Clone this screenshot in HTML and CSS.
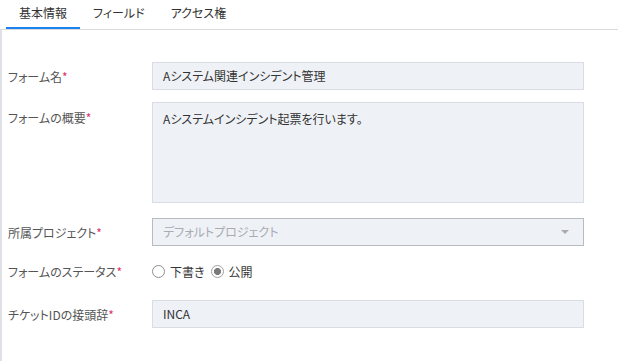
FILE: index.html
```html
<!DOCTYPE html>
<html lang="ja">
<head>
<meta charset="utf-8">
<link rel="stylesheet" href="styles.css">
</head>
<body>
<div class="page">
  <nav class="tabs">
    <div class="tab active">基本情報</div>
    <div class="tab">フィールド</div>
    <div class="tab">アクセス権</div>
  </nav>
  <div class="content">
    <form class="form">
      <div class="row">
        <label class="label">フォーム名<span class="req">*</span></label>
        <div class="field input">Aシステム関連インシデント管理</div>
      </div>
      <div class="row row-top">
        <label class="label label-top">フォームの概要<span class="req">*</span></label>
        <div class="field textarea">Aシステムインシデント起票を行います。</div>
      </div>
      <div class="row row-select">
        <label class="label">所属プロジェクト<span class="req">*</span></label>
        <div class="field select"><span class="placeholder">デフォルトプロジェクト</span><span class="caret"></span></div>
      </div>
      <div class="row row-radio">
        <label class="label">フォームのステータス<span class="req">*</span></label>
        <div class="radios">
          <span class="radio"><span class="dot"></span>下書き</span>
          <span class="radio checked"><span class="dot"></span>公開</span>
        </div>
      </div>
      <div class="row row-last">
        <label class="label">チケットIDの接頭辞<span class="req">*</span></label>
        <div class="field input">INCA</div>
      </div>
    </form>
  </div>
</div>
</body>
</html>
```
FILE: styles.css
```css
* { box-sizing: border-box; }
html, body {
  margin: 0;
  padding: 0;
  background: #fff;
}
body {
  font-family: "Noto Sans CJK JP", "Noto Sans", sans-serif;
  font-size: 12px;
  color: #333;
  font-feature-settings: "palt";
  width: 619px;
  height: 361px;
  overflow: hidden;
}
.page {
  width: 619px;
}
.tabs {
  display: flex;
  height: 30px;
  border-bottom: 1px solid #dcdcdc;
  margin-right: 1px;
  padding-left: 6px;
}
.tab {
  height: 29px;
  line-height: 26px;
  padding: 0 13px;
  font-size: 12px;
  color: #333;
}
.tab + .tab { margin-left: 0; }
.tab.active {
  border-bottom: 2px solid #1a82f0;
}
.content {
  border-left: 2px solid #dfe1e6;
  height: 331px;
  padding-top: 32px;
}
.form {
  display: flex;
  flex-direction: column;
  padding-left: 6px;
}
.row {
  display: flex;
  align-items: center;
  margin-bottom: 12px;
}
.row-top { align-items: flex-start; margin-bottom: 15px; }
.row-select { margin-bottom: 11px; }
.row-radio { height: 28px; margin-bottom: 15px; }
.label {
  width: 144px;
  flex: none;
  color: #555;
  font-size: 12px;
}
.label-top { padding-top: 7px; }
.req { color: #e0306a; }
.field {
  width: 432px;
  background: #eef1f6;
  border: 1px solid #d9dce2;
  padding: 0 10px;
  color: #333;
  font-size: 12px;
}
.input {
  height: 28px;
  line-height: 26px;
}
.textarea {
  height: 101px;
  padding-top: 7px;
  line-height: 18px;
}
.select {
  height: 28px;
  line-height: 26px;
  border-color: #b8bcc2;
  display: flex;
  justify-content: space-between;
  align-items: center;
}
.placeholder { color: #a8abb0; }
.caret {
  width: 0;
  height: 0;
  border-left: 4px solid transparent;
  border-right: 4px solid transparent;
  border-top: 4px solid #aaa;
  margin-right: 4px;
}
.radios {
  display: flex;
  align-items: center;
  gap: 6px;
}
.radio {
  display: inline-flex;
  align-items: center;
  color: #333;
}
.dot {
  width: 13px;
  height: 13px;
  border-radius: 50%;
  border: 1px solid #8f8f8f;
  background: #fff;
  margin-right: 5px;
  position: relative;
}
.radio.checked .dot {
  border-color: #a0a0a0;
  background: radial-gradient(circle, #7a7a7a 0 3.3px, #fff 3.8px);
}
```
